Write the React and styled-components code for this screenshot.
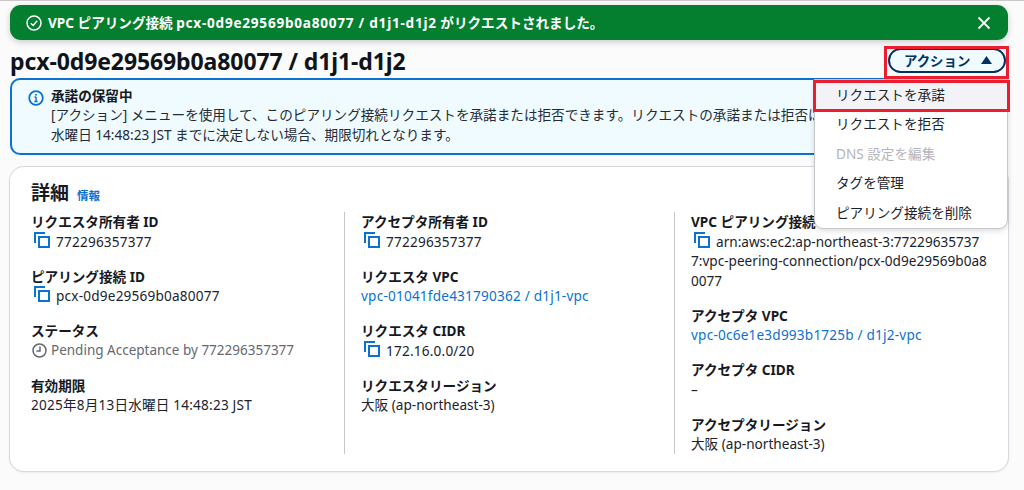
import React from "react";
import styled, { createGlobalStyle } from "styled-components";

const fonts = `"Noto Sans", "Noto Sans CJK JP", sans-serif`;

const GlobalStyle = createGlobalStyle`
  html, body {
    margin: 0;
    padding: 0;
    background: #fbfbfc;
    font-family: ${fonts};
    color: #16191f;
  }
  * { box-sizing: border-box; }
`;

const Page = styled.div`
  position: relative;
  width: 1024px;
  height: 490px;
  overflow: hidden;
  border-top: 1px solid #c9c9c9;
  padding: 4px 16px 0 10px;
`;

const Flash = styled.div`
  display: flex;
  align-items: center;
  height: 35px;
  padding: 0 17px 0 16px;
  background: #037f2f;
  border-radius: 11px;
  color: #fff;
  box-shadow: 0 2px 6px rgba(0, 7, 22, 0.2);
`;

const FlashText = styled.span`
  flex: 1;
  margin: 0 0 2px 6px;
  font-size: 13.6px;
  font-weight: 700;
  white-space: nowrap;
`;

const FlashId = styled.span`
  letter-spacing: 0.75px;
`;

const Header = styled.div`
  display: flex;
  align-items: center;
  justify-content: space-between;
  height: 38px;
  padding: 2px 2px 0 0;
`;

const Title = styled.h1`
  margin: 2px 0 0;
  font-size: 23px;
  font-weight: 700;
  line-height: 36px;
  letter-spacing: -0.1px;
  color: #0f141a;
`;

const ActionButton = styled.button`
  display: flex;
  align-items: center;
  gap: 11px;
  width: 118px;
  height: 25px;
  margin: 0;
  padding: 0 0 0 14px;
  border: 2px solid #033160;
  border-radius: 13px;
  background: #f0fbff;
  color: #033160;
  font: 700 13.4px ${fonts};
`;

const Info = styled.div`
  display: flex;
  gap: 7px;
  height: 77px;
  padding: 6px 16px 0 16px;
  border: 2px solid #0972d3;
  border-radius: 10px;
  background: #f0fbff;
  overflow: hidden;
`;

const InfoIconSlot = styled.div`
  flex: none;
  padding-top: 3px;
`;

const InfoTitle = styled.div`
  font-size: 13.6px;
  font-weight: 700;
  line-height: 19px;
`;

const InfoLine = styled.div`
  font-size: 13.6px;
  line-height: 19.6px;
  white-space: nowrap;
  color: #232b37;
`;

const Card = styled.section`
  height: 304px;
  margin-top: 12px;
  padding: 13px 20px 0 21px;
  border-radius: 14px;
  background: #fff;
  box-shadow: 0 0 0 1px #d8d8de, 0 1px 3px rgba(0, 7, 22, 0.12);
`;

const CardHead = styled.div`
  display: flex;
  align-items: baseline;
  gap: 8px;
  height: 32px;
  padding-top: 1px;
`;

const CardTitle = styled.h2`
  margin: 0;
  font-size: 19px;
  font-weight: 700;
  line-height: 25px;
`;

const InfoLink = styled.a`
  font-size: 11.5px;
  font-weight: 700;
  color: #0972d3;
`;

const Columns = styled.div`
  display: grid;
  grid-template-columns: 313px 330px 1fr;
`;

const Column = styled.div`
  height: 242px;
  padding-left: ${(p) => (p.$first ? "0" : "16px")};
  padding-right: 0;
  border-left: ${(p) => (p.$first ? "none" : "1px solid #c6c6cd")};
`;

const Field = styled.div`
  margin-bottom: 15.5px;
`;

const Label = styled.div`
  font-size: 13.6px;
  font-weight: 700;
  line-height: 19.5px;
  color: #16191f;
  white-space: nowrap;
`;

const Value = styled.div`
  font-size: 13.6px;
  line-height: 19.5px;
  height: ${(p) => (p.$tall ? "auto" : "19.5px")};
  letter-spacing: ${(p) => (p.$wide ? "0.2px" : "0")};
  color: #1b232d;
  word-break: break-all;
`;

const MutedValue = styled(Value)`
  display: flex;
  align-items: center;
  gap: 4px;
  margin-left: 1px;
  color: #656871;
  font-size: 13.5px;
`;

const ValueLink = styled.a`
  color: #0972d3;
`;

const CopySlot = styled.span`
  display: inline-block;
  width: 25px;
  height: 14px;
  padding-left: 3px;
  vertical-align: -2px;
`;

const Menu = styled.div`
  position: absolute;
  top: 79px;
  left: 815px;
  width: 192px;
  height: 148px;
  background: #fff;
  border-radius: 0 0 8px 8px;
  box-shadow: 0 0 0 1px #c6c6cd, 0 2px 6px rgba(0, 7, 22, 0.18);
`;

const MenuItem = styled.div`
  height: 29.4px;
  padding-left: 21px;
  font-size: 13.6px;
  line-height: 29px;
  color: ${(p) => (p.$disabled ? "#b4b4bb" : "#1b232d")};
  background: ${(p) => (p.$active ? "#f3f3f7" : "transparent")};
`;

const Marker = styled.div`
  position: absolute;
  top: ${(p) => p.$top}px;
  left: ${(p) => p.$left}px;
  width: ${(p) => p.$width}px;
  height: ${(p) => p.$height}px;
  border: 3px solid #ed1c2e;
`;

const CheckIcon = () => (
  <svg width="16" height="16" viewBox="0 0 16 16" fill="none" stroke="#fff" strokeWidth="1.5">
    <circle cx="8" cy="8" r="7" />
    <path d="M4.8 8.2 7.2 10.5 11.2 5.8" />
  </svg>
);

const CloseIcon = () => (
  <svg width="14" height="14" viewBox="0 0 14 14" fill="none" stroke="#fff" strokeWidth="1.8">
    <path d="M1.5 1.5 12.5 12.5M12.5 1.5 1.5 12.5" />
  </svg>
);

const CaretUp = () => (
  <svg width="11" height="8" viewBox="0 0 11 8" fill="#033160">
    <path d="M5.5 0 11 8H0z" />
  </svg>
);

const InfoIcon = () => (
  <svg width="16" height="16" viewBox="0 0 16 16" fill="none" stroke="#0972d3" strokeWidth="1.8">
    <circle cx="8" cy="8" r="6.8" />
    <path d="M8 7v4.5M6.3 11.5h3.4M6.5 7H8" strokeWidth="1.4" />
    <path d="M8 4v1.6" />
  </svg>
);

const CopyIcon = () => (
  <svg width="17" height="17" viewBox="0 0 17 17" fill="none" stroke="#0972d3" strokeWidth="2">
    <path d="M1 11V1h10" />
    <rect x="5" y="5" width="10" height="10" />
  </svg>
);

const ClockIcon = () => (
  <svg width="15" height="15" viewBox="0 0 15 15" fill="none" stroke="#656871" strokeWidth="1.5">
    <circle cx="7.5" cy="7.5" r="6.5" />
    <path d="M8 3.5V8H4.5" />
  </svg>
);

const Copyable = ({ children, tall }) => (
  <Value $tall={tall} $wide={!tall}>
    <CopySlot>
      <CopyIcon />
    </CopySlot>
    {children}
  </Value>
);

const App = () => (
  <Page>
    <GlobalStyle />
    <Flash>
      <CheckIcon />
      <FlashText>
        VPC ピアリング接続 <FlashId>pcx-0d9e29569b0a80077 / d1j1-d1j2</FlashId> がリクエストされました。
      </FlashText>
      <CloseIcon />
    </Flash>
    <Header>
      <Title>pcx-0d9e29569b0a80077 / d1j1-d1j2</Title>
      <ActionButton>
        アクション
        <CaretUp />
      </ActionButton>
    </Header>
    <Info>
      <InfoIconSlot>
        <InfoIcon />
      </InfoIconSlot>
      <div>
        <InfoTitle>承諾の保留中</InfoTitle>
        <InfoLine>[アクション] メニューを使用して、このピアリング接続リクエストを承諾または拒否できます。リクエストの承諾または拒否は</InfoLine>
        <InfoLine>水曜日 14:48:23 JST までに決定しない場合、期限切れとなります。</InfoLine>
      </div>
    </Info>
    <Card>
      <CardHead>
        <CardTitle>詳細</CardTitle>
        <InfoLink>情報</InfoLink>
      </CardHead>
      <Columns>
        <Column $first>
          <Field>
            <Label>リクエスタ所有者 ID</Label>
            <Copyable>772296357377</Copyable>
          </Field>
          <Field>
            <Label>ピアリング接続 ID</Label>
            <Copyable>pcx-0d9e29569b0a80077</Copyable>
          </Field>
          <Field>
            <Label>ステータス</Label>
            <MutedValue>
              <ClockIcon />
              Pending Acceptance by 772296357377
            </MutedValue>
          </Field>
          <Field>
            <Label>有効期限</Label>
            <Value $wide>2025年8月13日水曜日 14:48:23 JST</Value>
          </Field>
        </Column>
        <Column>
          <Field>
            <Label>アクセプタ所有者 ID</Label>
            <Copyable>772296357377</Copyable>
          </Field>
          <Field>
            <Label>リクエスタ VPC</Label>
            <Value $wide>
              <ValueLink>vpc-01041fde431790362 / d1j1-vpc</ValueLink>
            </Value>
          </Field>
          <Field>
            <Label>リクエスタ CIDR</Label>
            <Copyable>172.16.0.0/20</Copyable>
          </Field>
          <Field>
            <Label>リクエスタリージョン</Label>
            <Value>大阪 (ap-northeast-3)</Value>
          </Field>
        </Column>
        <Column>
          <Field>
            <Label>VPC ピアリング接続 ARN</Label>
            <Copyable tall>arn:aws:ec2:ap-northeast-3:772296357377:vpc-peering-connection/pcx-0d9e29569b0a80077</Copyable>
          </Field>
          <Field>
            <Label>アクセプタ VPC</Label>
            <Value $wide>
              <ValueLink>vpc-0c6e1e3d993b1725b / d1j2-vpc</ValueLink>
            </Value>
          </Field>
          <Field>
            <Label>アクセプタ CIDR</Label>
            <Value>–</Value>
          </Field>
          <Field>
            <Label>アクセプタリージョン</Label>
            <Value>大阪 (ap-northeast-3)</Value>
          </Field>
        </Column>
      </Columns>
    </Card>
    <Menu>
      <MenuItem $active>リクエストを承諾</MenuItem>
      <MenuItem>リクエストを拒否</MenuItem>
      <MenuItem $disabled>DNS 設定を編集</MenuItem>
      <MenuItem>タグを管理</MenuItem>
      <MenuItem>ピアリング接続を削除</MenuItem>
    </Menu>
    <Marker $top={45} $left={884} $width={125} $height={33} />
    <Marker $top={79} $left={813} $width={197} $height={32} />
  </Page>
);

export default App;
